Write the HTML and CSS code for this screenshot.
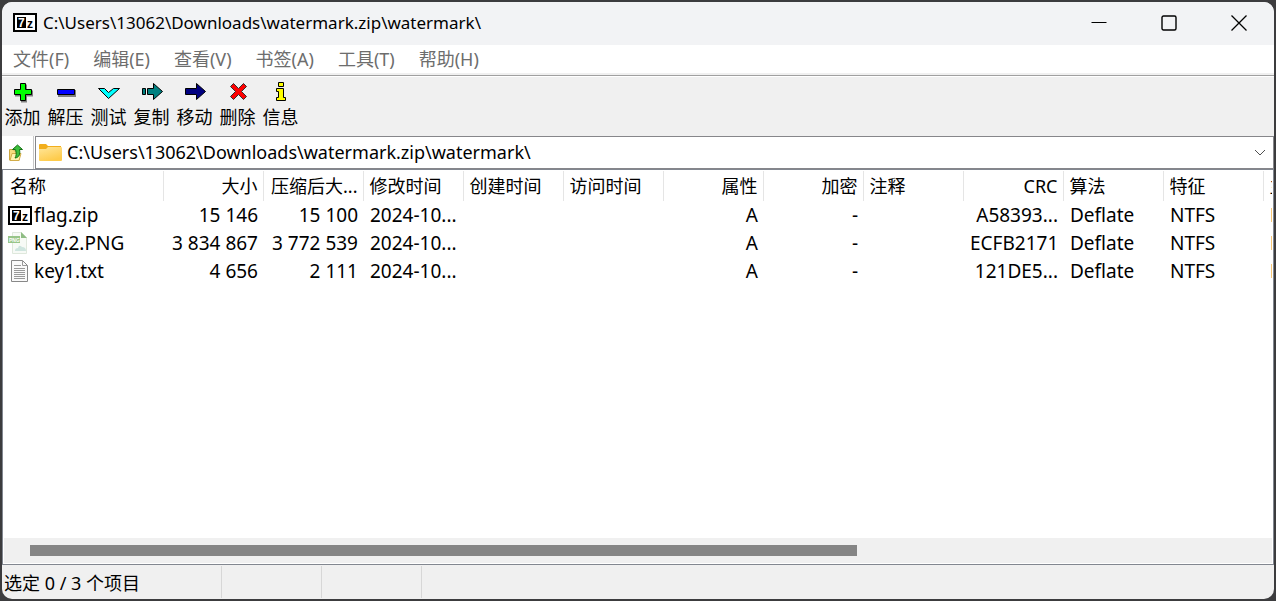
FILE: index.html
```html
<!DOCTYPE html>
<html lang="zh-CN">

<head>
    <meta charset="UTF-8">
    <meta name="viewport" content="width=device-width, initial-scale=1.0">
    <title>C:\Users\13062\Downloads\watermark.zip\watermark\</title>
    <link rel="stylesheet" href="styles.css">
</head>

<body>
    <div class="window">
        <header class="titlebar">
            <svg class="logo" width="24" height="19">
                <rect x="1" y="1" width="22" height="17" fill="#fff" stroke="#000" stroke-width="2" />
                <rect x="4" y="4" width="9" height="11" fill="#000" />
                <text x="5" y="14" fill="#fff" class="logo-text">7</text>
                <text x="14" y="15" class="logo-text">z</text>
            </svg>
            <h1>C:\Users\13062\Downloads\watermark.zip\watermark\</h1>
            <div class="window-buttons">
                <button type="button" aria-label="最小化">
                    <svg width="16" height="16"><path d="M0.500 7.500h15" /></svg>
                </button>
                <button type="button" aria-label="最大化">
                    <svg width="16" height="16"><rect x="1" y="1" width="14" height="14" rx="1.500" stroke-width="1.400" /></svg>
                </button>
                <button type="button" aria-label="关闭">
                    <svg width="16" height="16"><path d="M0.500 0.500l15 15M15.500 0.500l-15 15" stroke-width="1.300" /></svg>
                </button>
            </div>
        </header>

        <nav class="menubar">
            <button type="button">文件(F)</button>
            <button type="button">编辑(E)</button>
            <button type="button">查看(V)</button>
            <button type="button">书签(A)</button>
            <button type="button">工具(T)</button>
            <button type="button">帮助(H)</button>
        </nav>

        <div class="toolbar">
            <button type="button">
                <svg width="24" height="22"><path d="M10 3.500h6v6h6v6h-6v6h-6v-6h-6v-6h6z" fill="#808080" /><path d="M9.500 2.500h5v6h6v5h-6v6h-5v-6h-6v-5h6z" fill="#0f0" stroke="#000" /></svg>
                添加
            </button>
            <button type="button">
                <svg width="24" height="22"><path d="M4 9h18v7h-18z" fill="#808080" /><path d="M3.500 8.500h17v5h-17z" fill="#00f" stroke="#000" /></svg>
                解压
            </button>
            <button type="button">
                <svg width="24" height="22"><path d="M1.500 7.500h6l4 4 5-4h6l-11 10z" fill="#0ff" stroke="#000" /></svg>
                测试
            </button>
            <button type="button">
                <svg width="24" height="22"><path d="M2.500 7.500h3v6h-3zM7.500 7.500h6v-5l9 8-9 8v-5h-6z" fill="#008080" stroke="#000" /></svg>
                复制
            </button>
            <button type="button">
                <svg width="24" height="22"><path d="M2.500 7.500h11v-5l9 8-9 8v-5h-11z" fill="#000080" stroke="#000" /></svg>
                移动
            </button>
            <button type="button">
                <svg width="24" height="22"><path d="M4.500 5.500l3-3 5 5 5-5 3 3-5 5 5 5-3 3-5-5-5 5-3-3 5-5z" fill="#f00" stroke="#303030" /></svg>
                删除
            </button>
            <button type="button">
                <svg width="24" height="22"><path d="M9.500 1.500h5v4h-5zM7.500 7.500h7v9h2v3h-9v-3h2v-6h-2z" fill="#ff0" stroke="#000" /></svg>
                信息
            </button>
        </div>

        <div class="address">
            <button type="button" class="up" aria-label="上一级">
                <svg width="16" height="18">
                    <path d="M2.500 5.500h4l1 1.500h4l1 9h-10z" fill="#f6dc80" stroke="#cda640" />
                    <path d="M3 16.500l2-7h9l-2 7z" fill="#fff2b0" stroke="#d2ac48" />
                    <path d="M5.500 5.500l5-4.500 5 4.500h-3c1 5-0.500 8-4.500 8.500 1.500-2 1.500-5 0.500-8.500z" fill="#3cbf3c" stroke="#147014" />
                </svg>
            </button>
            <div class="combo">
                <svg width="23" height="19">
                    <defs>
                        <linearGradient id="folder" x2="0.500" y2="1">
                            <stop stop-color="#ffe69a" />
                            <stop offset="1" stop-color="#fecb4b" />
                        </linearGradient>
                    </defs>
                    <path d="M0 2q0-1 1-1h6l2 2h13v5H0z" fill="#f2ae1c" />
                    <path d="M0 6h7l2-2h13q1 0 1 1v12q0 1-1 1H1q-1 0-1-1z" fill="url(#folder)" />
                </svg>
                <input type="text" aria-label="路径" value="C:\Users\13062\Downloads\watermark.zip\watermark\">
                <button type="button" aria-label="展开">
                    <svg width="12" height="8"><path d="M1 1l5 5 5-5" fill="none" stroke="#505050" /></svg>
                </button>
            </div>
        </div>

        <main class="list">
            <div class="list-view">
                <table>
                    <thead>
                        <tr>
                            <th class="name">名称</th>
                            <th class="num">大小</th>
                            <th class="num">压缩后大...</th>
                            <th>修改时间</th>
                            <th>创建时间</th>
                            <th>访问时间</th>
                            <th class="num">属性</th>
                            <th class="num">加密</th>
                            <th>注释</th>
                            <th class="num">CRC</th>
                            <th>算法</th>
                            <th>特征</th>
                            <th>主操作系统</th>
                        </tr>
                    </thead>
                    <tbody>
                        <tr>
                            <td class="name">
                                <div>
                                    <svg class="logo" width="24" height="19">
                                        <rect x="1" y="1" width="22" height="17" fill="#fff" stroke="#000" stroke-width="2" />
                                        <rect x="4" y="4" width="9" height="11" fill="#000" />
                                        <text x="5" y="14" fill="#fff" class="logo-text">7</text>
                                        <text x="14" y="15" class="logo-text">z</text>
                                    </svg>flag.zip
                                </div>
                            </td>
                            <td class="num">15 146</td>
                            <td class="num">15 100</td>
                            <td>2024-10...</td>
                            <td></td>
                            <td></td>
                            <td class="num">A</td>
                            <td class="num">-</td>
                            <td></td>
                            <td class="num">A58393...</td>
                            <td>Deflate</td>
                            <td>NTFS</td>
                            <td>FAT</td>
                        </tr>
                        <tr>
                            <td class="name">
                                <div>
                                    <svg width="24" height="22">
                                        <path d="M4.500 0.500h9l5 5v16h-14z" fill="#f7faf6" stroke="#dfe8dc" />
                                        <path d="M13 0l6 6h-6z" fill="#8fbd84" />
                                        <path d="M7 19q0-3 3-3 1-4 4-1 4 0 4 4z" fill="#cfe5df" />
                                        <path d="M0 4h12v7H0z" fill="#98c589" />
                                        <text x="1" y="10" class="png-text">PNG</text>
                                    </svg>key.2.PNG
                                </div>
                            </td>
                            <td class="num">3 834 867</td>
                            <td class="num">3 772 539</td>
                            <td>2024-10...</td>
                            <td></td>
                            <td></td>
                            <td class="num">A</td>
                            <td class="num">-</td>
                            <td></td>
                            <td class="num">ECFB2171</td>
                            <td>Deflate</td>
                            <td>NTFS</td>
                            <td>FAT</td>
                        </tr>
                        <tr>
                            <td class="name">
                                <div>
                                    <svg width="24" height="22">
                                        <path d="M3.500 0.500h11l5 5v16h-16z" fill="#fafafa" stroke="#888" />
                                        <path d="M14.500 0.500v5h5M6 5.500h7M6 8.500h11M6 10.500h11M6 12.500h11M6 14.500h11M6 16.500h11M6 18.500h11" fill="none" stroke="#999" />
                                    </svg>key1.txt
                                </div>
                            </td>
                            <td class="num">4 656</td>
                            <td class="num">2 111</td>
                            <td>2024-10...</td>
                            <td></td>
                            <td></td>
                            <td class="num">A</td>
                            <td class="num">-</td>
                            <td></td>
                            <td class="num">121DE5...</td>
                            <td>Deflate</td>
                            <td>NTFS</td>
                            <td>FAT</td>
                        </tr>
                    </tbody>
                </table>
            </div>
            <div class="scrollbar">
                <div class="thumb"></div>
            </div>
        </main>

        <footer class="statusbar">
            <span class="status">选定 0 / 3 个项目</span>
            <span></span>
            <span></span>
        </footer>
    </div>
</body>

</html>
```

FILE: styles.css
```css
* {
    box-sizing: border-box;
}

body {
    margin: 0;
    padding: 2px;
    height: 100vh;
    background-color: #3c3c3e;
    font-family: "Noto Sans", "Noto Sans CJK SC", sans-serif;
    font-size: 18px;
    line-height: 24px;
    color: #000;
}

button,
input {
    font: inherit;
    color: inherit;
    margin: 0;
    padding: 0;
    border: none;
    background: none;
}

svg {
    flex: none;
}

.logo-text {
    font: bold 12px "Liberation Sans", sans-serif;
}

.png-text {
    font: bold 5px "Liberation Sans", sans-serif;
    fill: #fff;
}

.window {
    display: flex;
    flex-direction: column;
    height: 100%;
    background-color: #f0f0f0;
    border-radius: 10px;
    overflow: hidden;
}

.titlebar {
    display: flex;
    align-items: center;
    height: 43px;
    padding: 0 0 2px 11px;
    background-color: #f2f3f5;
}

.titlebar h1 {
    flex: 1;
    margin: 0 0 0 6px;
    font-size: 17px;
    font-weight: normal;
}

.window-buttons {
    display: flex;
}

.window-buttons button {
    display: flex;
    align-items: center;
    justify-content: center;
    width: 70px;
    height: 40px;
}

.window-buttons svg {
    fill: none;
    stroke: #000;
}

.menubar {
    display: flex;
    gap: 2px;
    height: 28px;
    background-color: #fff;
    color: #6d6d6d;
}

.menubar button {
    padding: 0 11px;
}

.toolbar {
    display: flex;
    height: 61px;
    margin-top: 2px;
    border-top: 1px solid #a0a0a0;
    box-shadow: inset 0 1px #fff;
}

.toolbar button {
    display: flex;
    flex-direction: column;
    align-items: center;
    width: 43px;
    padding: 5px 2px 0 0;
    line-height: 28px;
}

.address {
    display: flex;
    height: 33px;
    background-color: #fff;
}

.address .up {
    width: 32px;
    padding: 4px 0 0 5px;
    border-right: 1px solid #c8c8c8;
    text-align: left;
}

.combo {
    display: flex;
    align-items: center;
    flex: 1;
    margin-left: 1px;
    padding-left: 3px;
    border: 1px solid #86868a;
}

.combo input {
    flex: 1;
    min-width: 0;
    padding: 0 0 2px 5px;
}

.combo button {
    display: flex;
    justify-content: center;
    width: 26px;
}

.list {
    display: flex;
    flex-direction: column;
    flex: 1;
    min-height: 0;
    border: 1px solid #828790;
    background-color: #fff;
}

.list-view {
    flex: 1;
    min-height: 0;
    margin: 1px;
    overflow: hidden;
}

table {
    width: 1359px;
    table-layout: fixed;
    border-collapse: collapse;
}

th,
td {
    width: 100px;
    height: 28px;
    padding: 0 5px 0 6px;
    font-weight: normal;
    text-align: left;
    white-space: nowrap;
}

th {
    height: 30px;
    border-right: 1px solid #e5e5e5;
}

td {
    padding-left: 7px;
    font-size: 19px;
}

.name {
    width: 159px;
}

td.name {
    padding-left: 4px;
}

td.name div {
    display: flex;
    align-items: center;
    gap: 2px;
}

.num {
    text-align: right;
}

.scrollbar {
    height: 25px;
    margin: 0 1px 1px;
    padding: 7px 26px;
    background-color: #f0f0f0;
}

.thumb {
    width: 68%;
    height: 11px;
    background-color: #858585;
}

.statusbar {
    display: flex;
    height: 34px;
    padding: 1px 0;
    line-height: 34px;
}

.statusbar span {
    width: 100px;
    border-right: 1px solid #d7d7d7;
}

.statusbar .status {
    width: 220px;
    padding-left: 2px;
}
```
